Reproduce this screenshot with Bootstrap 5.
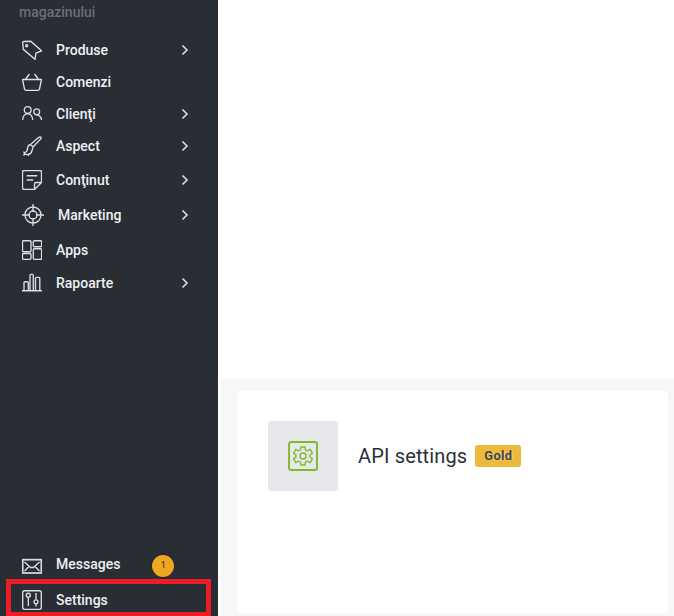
<!DOCTYPE html>
<html lang="ro"><head><meta charset="utf-8">
<link href="https://cdn.jsdelivr.net/npm/bootstrap@5.3.0/dist/css/bootstrap.min.css" rel="stylesheet">
<style>
html,body{height:616px;overflow:hidden;margin:0;background:#fff;font-family:Roboto,sans-serif}
.shell{height:616px;width:674px}
.side{width:218px;background:#292d34;flex:none;color:#eef0f3;font-weight:500;font-size:14px}
.shop{height:24px;line-height:24px;padding-left:19px;color:#6a6f77;font-size:14px}
.menu-top{margin-top:10px}
.item{padding-left:22px;padding-right:29px;color:#eef0f3;text-decoration:none}
.item svg.ico{width:20px;height:20px;flex:none;margin-right:14px;fill:none;stroke:#dcdee1;stroke-width:1.35}
.item svg.chev{width:8px;height:12px;margin-left:auto;fill:none;stroke:#dcdee1;stroke-width:1.6}
.h30{height:30px}.h32{height:32px}.h34{height:34px}.h36{height:36px}
.item.mk svg.ico{width:22px;height:22px}
.bottom-g{margin-top:auto}
.count{width:22px;height:22px;border-radius:50%;background:#f0a720;color:#5a4210;font-size:9px;margin-left:32px;box-shadow:0 0 2px rgba(0,0,0,.4)}
.msg{height:44px;padding-top:18px}
.msg-label{margin-bottom:4px}
.marked{height:37px;margin-left:6px;width:205px;border:5px solid #ee1c25;border-bottom-width:4px;padding-left:11px;padding-top:4px}
.gapc{width:3px;flex:none;background:#fff}
.main{flex:1;min-width:0}
.blank{height:379px}
.panel{height:237px;background:#f6f7f9;padding:12px 6px 3px 17px}
.sheet{height:222px;background:#fff;border-radius:3px;padding:30px}
.tile{width:70px;height:70px;background:#e6e7ea;border-radius:3px}
.tile svg{width:30px;height:30px;fill:none;stroke:#7fba27}
.ttl{font-size:20px;color:#2c3038;margin-left:20px;font-weight:400;letter-spacing:.15px}
.tier{background:#edb93c;color:#454545;font-size:13px;font-weight:700;border-radius:3px;height:22px;width:46px;margin-left:8px;letter-spacing:.3px;text-shadow:1px 0 1px rgba(255,255,255,.45)}
</style></head><body>
<div class="shell d-flex">
<aside class="side d-flex flex-column">
<div class="shop">magazinului</div>
<nav class="menu-top d-flex flex-column">
<a class="item h32 d-flex align-items-center" href="#"><svg class="ico" viewBox="0 0 20 20"><path d="M.7 2.700Q.6 1.600 1.800 1.500L8.700 1.300 19.700 11 14 13 13 19.300 1.300 9.300Z"/><circle cx="4.700" cy="5.700" r="1"/></svg>Produse<svg class="chev" viewBox="0 0 8 12"><path d="M1.500 1.500 6 6 1.500 10.500"/></svg></a>
<a class="item h32 d-flex align-items-center" href="#"><svg class="ico" viewBox="0 0 20 20"><path d="M.5 7.500H19.500L17.500 16.800Q17.200 18.300 15.700 18.300H4.300Q2.800 18.300 2.500 16.800ZM3.300 7.500 7.500 2M16.700 7.500 12.500 2"/></svg>Comenzi</a>
<a class="item h32 d-flex align-items-center" href="#"><svg class="ico" viewBox="0 0 20 20"><circle cx="5.700" cy="6" r="3.400"/><circle cx="14.700" cy="7.700" r="2.900"/><path d="M.7 16C.7 12 3 9.700 5.700 9.700S10.700 12 10.700 16M13.500 11C17 10.500 19.500 13 19.500 16"/></svg>Clienţi<svg class="chev" viewBox="0 0 8 12"><path d="M1.500 1.500 6 6 1.500 10.500"/></svg></a>
<a class="item h32 d-flex align-items-center" href="#"><svg class="ico" viewBox="0 0 20 20"><path d="M18 .8C19 .8 19.500 1.800 19 2.600L11 11 8.500 8.500 16.500 1.500ZM8.500 8.500C6 9 5.500 11 5.500 13 5 15 4 17 2 16.500 3 19.500 9 19.500 10 14.500 10.500 13 11 12 11 11"/><path d="M1.500 19.500 3 17.500M6 19.500H7"/></svg>Aspect<svg class="chev" viewBox="0 0 8 12"><path d="M1.500 1.500 6 6 1.500 10.500"/></svg></a>
<a class="item h36 d-flex align-items-center" href="#"><svg class="ico" viewBox="0 0 20 20"><path d="M19.500 12.500V2Q19.500.5 18 .5H2Q.5.5.5 2V18Q.5 19.500 2 19.500H12.500ZM12.500 19.500V14Q12.500 12.500 14 12.500H19.500M4.700 5.700H15.300M4.700 10H11.300"/></svg>Conţinut<svg class="chev" viewBox="0 0 8 12"><path d="M1.500 1.500 6 6 1.500 10.500"/></svg></a>
<a class="item mk h34 d-flex align-items-center" href="#"><svg class="ico" viewBox="0 0 22 22"><circle cx="11" cy="11" r="8"/><circle cx="11" cy="11" r="4"/><path d="M11 0V8M11 14V22M0 11H8M14 11H22"/></svg>Marketing<svg class="chev" viewBox="0 0 8 12"><path d="M1.500 1.500 6 6 1.500 10.500"/></svg></a>
<a class="item h36 d-flex align-items-center" href="#"><svg class="ico" viewBox="0 0 20 20"><rect x=".5" y=".7" width="8.500" height="11" rx="1"/><rect x=".5" y="13.500" width="8.500" height="5.800" rx="1"/><rect x="11.300" y=".7" width="8.300" height="6" rx="1"/><rect x="11.300" y="8.700" width="8.300" height="10.600" rx="1"/></svg>Apps</a>
<a class="item h30 d-flex align-items-center" href="#"><svg class="ico" viewBox="0 0 20 20"><path d="M0 17.700H20M2 17.500V9.700Q2 8.700 3 8.700H5.300Q6.300 8.700 6.300 9.700V17.500M8 17.500V2.300Q8 1.300 9 1.300H10.300Q11.300 1.300 11.300 2.300V17.500M13.500 17.500V5.300Q13.500 4.300 14.500 4.300H16.800Q17.800 4.300 17.800 5.300V17.500"/></svg>Rapoarte<svg class="chev" viewBox="0 0 8 12"><path d="M1.500 1.500 6 6 1.500 10.500"/></svg></a>
</nav>
<div class="bottom-g d-flex flex-column">
<a class="item msg d-flex align-items-center" href="#"><svg class="ico" viewBox="0 0 20 20"><rect x=".7" y="3.700" width="18.600" height="13.300" stroke-width="1.700"/><path d="M2.500 6 8.700 11.500H11.300L17.500 6M2.500 15 7 10.500M17.500 15 13 10.500"/></svg><span class="msg-label">Messages</span><span class="count d-flex align-items-center justify-content-center">1</span></a>
<a class="item marked d-flex align-items-center" href="#"><svg class="ico" viewBox="0 0 20 20"><rect x=".7" y=".7" width="18.600" height="18.600" rx="2"/><path d="M6.300 7.500V16M14 3V9.500M14 14V16.500"/><circle cx="6.300" cy="5.200" r="2"/><circle cx="14" cy="11.800" r="2"/></svg>Settings</a>
</div>
</aside>
<div class="gapc"></div>
<main class="main d-flex flex-column">
<div class="blank"></div>
<section class="panel"><div class="sheet"><div class="d-flex align-items-center">
<div class="tile d-flex align-items-center justify-content-center"><svg viewBox="0 0 30 30"><rect x="1" y="1" width="28" height="28" rx="2" stroke-width="1.900"/><circle cx="15" cy="15" r="3" stroke-width="1.400"/><path stroke-width="1.400" d="M13 6H17L17.500 8.800 19.700 9.800 22.200 8.500 24.300 12.200 22 14V16L24.300 17.800 22.200 21.500 19.700 20.200 17.500 21.200 17 24H13L12.500 21.200 10.300 20.200 7.800 21.500 5.700 17.800 8 16V14L5.700 12.200 7.800 8.500 10.300 9.800 12.500 8.800Z"/></svg></div>
<span class="ttl">API settings</span><span class="tier d-flex align-items-center justify-content-center">Gold</span>
</div></div></section>
</main>
</div>
<script src="https://cdn.jsdelivr.net/npm/bootstrap@5.3.0/dist/js/bootstrap.bundle.min.js"></script>
</body></html>
